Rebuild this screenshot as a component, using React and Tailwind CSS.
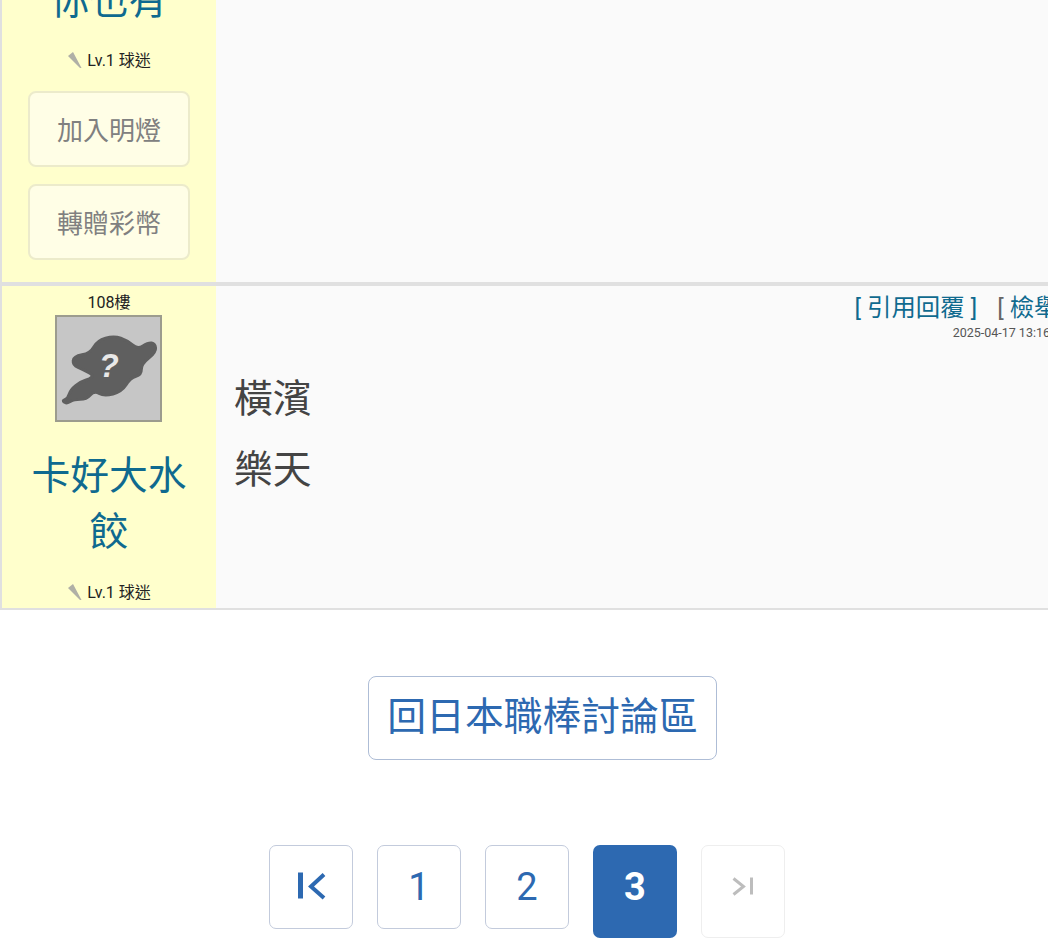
const cjk = { fontFamily: 'Roboto, "Noto Sans CJK TC", sans-serif' };

const blob = [[6,85],[11,83],[14,74],[24,66],[34,63],[37,59],[27,54],[16,49],[17,40],[34,37],[41,24],[58,19],[72,24],[82,33],[93,26],[100,27],[101,36],[86,48],[86,59],[75,62],[66,76],[48,81],[38,75],[30,84],[17,84],[11,88],[7,87]];

function smooth(pts) {
  const mid = (a, b) => [(a[0] + b[0]) / 2, (a[1] + b[1]) / 2];
  const start = mid(pts[pts.length - 1], pts[0]);
  let d = `M${start[0]} ${start[1]}`;
  pts.forEach((p, i) => {
    const m = mid(p, pts[(i + 1) % pts.length]);
    d += ` Q${p[0]} ${p[1]} ${m[0]} ${m[1]}`;
  });
  return d + ' Z';
}

function Rank() {
  return (
    <div className="flex items-center justify-center h-[16px] text-[16px] leading-[16px] text-[#222]">
      <svg width="16" height="16" viewBox="0 0 16 16" className="mr-[4px] -mt-[2px]">
        <path d="M1 4 L6 0 L14.5 16 L13 16 Z" fill="#b0b0a6" />
      </svg>
      <span>Lv.1 球迷</span>
    </div>
  );
}

function SideButton({ children, className }) {
  return (
    <div className={`w-[162px] h-[76px] mx-auto pt-[4px] flex items-center justify-center rounded-[8px] border-2 border-[#ecebcb] bg-[#fffee6] text-[26px] text-[#808080] ${className}`}>
      {children}
    </div>
  );
}

function PageBox({ children, className }) {
  return (
    <div className={`w-[84px] flex items-center justify-center rounded-[7px] text-[38px] ${className}`}>
      {children}
    </div>
  );
}

export default function App() {
  return (
    <div className="h-[944px] w-[1048px] overflow-hidden bg-white relative" style={cjk}>
      <div className="w-[1085px] -mt-[28px]">
        <div className="flex h-[310px] border-l-2 border-[#e0e0e0]">
          <div className="w-[214px] bg-[#ffffcc] text-center pt-[1px]">
            <div className="text-[38.8px] leading-[56px] text-[#0f6a8f]">你也有</div>
            <div className="pt-[24px]"><Rank /></div>
            <SideButton className="mt-[22px]">加入明燈</SideButton>
            <SideButton className="mt-[17px]">轉贈彩幣</SideButton>
          </div>
          <div className="flex-1 bg-[#fafafa]" />
        </div>
        <div className="h-[4px] bg-[#e0e0e0]" />
        <div className="flex h-[322px] border-l-2 border-[#e0e0e0]">
          <div className="w-[214px] bg-[#ffffcc] text-center">
            <div className="text-[16px] leading-[16px] pt-[9px] text-[#222]">108樓</div>
            <div className="mt-[4px] ml-[53px] w-[107px] h-[107px] bg-[#c6c6c6] border-2 border-[#9c9c8e]">
              <svg viewBox="0 0 105 105" width="103" height="103">
                <path d={smooth(blob)} fill="#5f5f5f" stroke="#5f5f5f" strokeWidth="3" strokeLinejoin="round" />
                <text x="53" y="61" textAnchor="middle" fontSize="33" fontWeight="700" fontStyle="italic" fill="#e8e8e8" style={{ fontFamily: '"Liberation Sans", sans-serif' }}>?</text>
              </svg>
            </div>
            <div className="mt-[26px] px-[29px] text-[38.8px] leading-[56px] text-[#0f6a8f]">卡好大水餃</div>
            <div className="mt-[25px]"><Rank /></div>
          </div>
          <div className="flex-1 bg-[#fafafa] relative">
            <div className="absolute right-[14px] top-[6px] text-right">
              <div className="text-[24.4px] leading-[32px] text-[#0f6a8f]">
                [ 引用回覆 ]<span className="ml-[20px]"><span className="text-[#666]">[</span> 檢舉 <span className="text-[#666]">]</span></span>
              </div>
              <div className="text-[12.5px] leading-[16px] text-[#555] mr-[21px] mt-[1px]">2025-04-17 13:16</div>
            </div>
            <div className="pl-[18px] pt-[77px] text-[38.8px] leading-[71px] text-[#444]">
              <div>橫濱</div>
              <div>樂天</div>
            </div>
          </div>
        </div>
        <div className="h-[2px] bg-[#e0e0e0]" />
        <div className="mt-[66px] flex justify-center">
          <div className="w-[349px] h-[84px] pb-[2px] flex items-center justify-center rounded-[8px] border border-[#aebdd6] text-[38.8px] text-[#2d69b1]">回日本職棒討論區</div>
        </div>
        <div className="mt-[85px] flex gap-[24px] justify-center pr-[31px] items-start">
          <PageBox className="h-[84px] border border-[#c3cbdc] text-[#2d69b1]">
            <svg width="40" height="40" viewBox="0 0 40 40">
              <path d="M9.5 5.5 V31.5" stroke="#2d69b1" strokeWidth="5" fill="none" />
              <path d="M33 7.5 L20 19.5 L33 31" stroke="#2d69b1" strokeWidth="4" fill="none" />
            </svg>
          </PageBox>
          <PageBox className="h-[84px] border border-[#c3cbdc] text-[#2d69b1]">1</PageBox>
          <PageBox className="h-[84px] border border-[#c3cbdc] text-[#2d69b1]">2</PageBox>
          <PageBox className="h-[93px] bg-[#2d69b1] text-white font-bold pb-[9px]">3</PageBox>
          <PageBox className="h-[93px] border border-[#eeeeee] pb-[9px]">
            <svg width="30" height="30" viewBox="0 0 30 30">
              <path d="M5.5 6.5 L15.5 14.5 L5.5 22.5" stroke="#bdbdbd" strokeWidth="3" fill="none" />
              <path d="M23.5 5.5 V22.5" stroke="#bdbdbd" strokeWidth="3" fill="none" />
            </svg>
          </PageBox>
        </div>
      </div>
    </div>
  );
}
